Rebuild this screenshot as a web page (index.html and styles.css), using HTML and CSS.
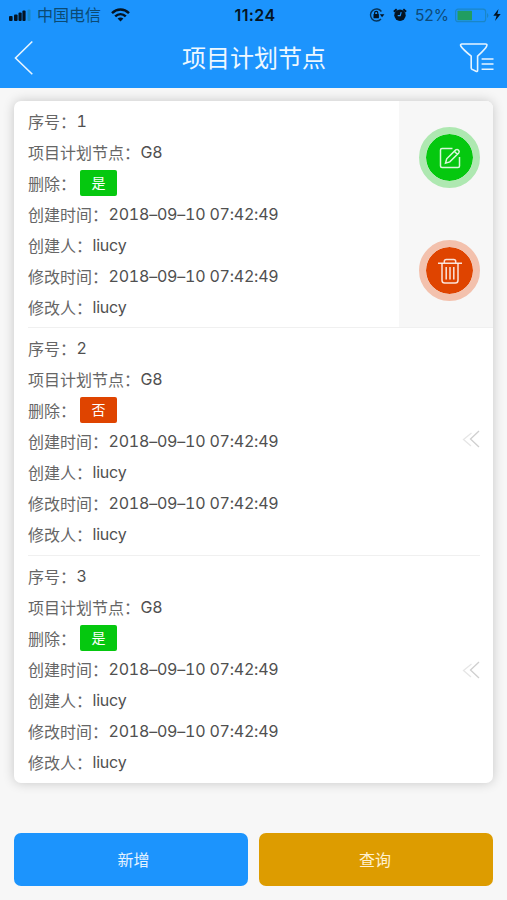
FILE: index.html
```html
<!DOCTYPE html>
<html lang="zh-CN">
<head>
    <meta charset="UTF-8">
    <meta name="viewport" content="width=device-width, initial-scale=1.0">
    <title>项目计划节点</title>
    <link rel="stylesheet" href="styles.css">
</head>
<body>
    <header>
        <div class="status-bar">
            <div class="status-left">
                <svg class="signal" width="22" height="13" viewBox="0 0 22 13">
                    <rect x="0" y="7" width="3.6" height="5" rx="1"/>
                    <rect x="5" y="5.5" width="3.6" height="6.5" rx="1"/>
                    <rect x="9.5" y="3.5" width="3.2" height="8.5" rx="1"/>
                    <rect x="13.4" y="1.5" width="3.2" height="10.5" rx="1"/>
                    <rect x="18.5" y="0.5" width="3" height="11.5" rx="1" fill="#1787c8"/>
                </svg>
                <span class="carrier">中国电信</span>
                <svg class="wifi" width="19" height="14" viewBox="0 0 19 14" fill="none" stroke="#041423" stroke-width="2.5">
                    <path d="M1 5.1C6 0.4 13 0.4 18 5.1"/>
                    <path d="M4.2 8.4C7.3 5.5 11.7 5.5 14.8 8.4"/>
                    <path d="M6.6 10.5C8.4 9 10.6 9 12.4 10.5L9.5 13.4Z" fill="#041423" stroke="none"/>
                </svg>
            </div>
            <span class="clock">11:24</span>
            <div class="status-right">
                <svg width="16" height="14" viewBox="0 0 16 14">
                    <path d="M12.4 3.5A6 6 0 1 0 12 11" fill="none" stroke="#073459" stroke-width="1.4"/>
                    <path d="M10.8 6.2H15.4L13.1 9.2Z"/>
                    <rect x="4.5" y="6" width="5.4" height="4.3" rx="0.5"/>
                    <path d="M5.6 6.2V5A1.6 1.6 0 0 1 8.8 5V6.2" fill="none" stroke="#041423" stroke-width="1.2"/>
                </svg>
                <svg class="alarm" width="14" height="14" viewBox="0 0 14 14">
                    <circle cx="7" cy="7.3" r="5.7"/>
                    <path d="M0.9 3.8L3.7 1.2M10.3 1.2L13.1 3.8" stroke="#041423" stroke-width="2"/>
                    <path d="M8.2 4.2L7.2 7.7H4.7" fill="none" stroke="#1c94fd" stroke-width="1.2"/>
                </svg>
                <span class="percent">52%</span>
                <svg class="battery" width="35" height="15" viewBox="0 0 35 15">
                    <rect x="0.6" y="1.1" width="30" height="12.6" rx="2.5" fill="none" stroke="#1a86c8" stroke-width="1.2"/>
                    <rect x="2.5" y="2.8" width="14.5" height="9.5" rx="0.6" fill="#219d61"/>
                    <path d="M32 5A3 3 0 0 1 32 10Z" fill="#1a86c8"/>
                </svg>
                <svg class="bolt" width="8" height="12" viewBox="0 0 8 12">
                    <path d="M5.5 0L0.3 6.7H3.6L2 12L7.7 5H4.4Z"/>
                </svg>
            </div>
        </div>
        <div class="nav-bar">
            <svg class="back" width="20" height="36" viewBox="0 0 20 36">
                <path d="M18.3 1.5L1.5 18L18.3 34.3"/>
            </svg>
            <h1>项目计划节点</h1>
            <svg class="filter" width="36" height="32" viewBox="0 0 36 32">
                <path d="M2.7 2H26.4Q28.6 2 27.7 4Q27 6.4 18.6 14.2V28.2Q18.6 30 17 29.2L13.2 27.4Q12.2 27 12.2 26V14.2Q3.5 7 1.8 4Q1 2.3 2.7 2Z"/>
                <path d="M22.6 17H34.5M22.6 22H34.5M22.6 27.2H34.5"/>
            </svg>
        </div>
    </header>

    <div class="card">
        <div class="item open">
            <div class="info">
                <p>序号：<span>1</span></p>
                <p>项目计划节点：<span>G8</span></p>
                <p>删除：<b class="tag yes">是</b></p>
                <p>创建时间：<span>2018–09–10 07:42:49</span></p>
                <p>创建人：<span>liucy</span></p>
                <p>修改时间：<span>2018–09–10 07:42:49</span></p>
                <p>修改人：<span>liucy</span></p>
            </div>
            <div class="actions">
                <button class="circle edit">
                    <svg width="24" height="24" viewBox="0 0 24 24">
                        <path d="M14.5 2.5H4Q2.5 2.5 2.5 4V20Q2.5 21.5 4 21.5H20Q21.5 21.5 21.5 20V11"/>
                        <path d="M7.5 17.2L8.7 12.8L17.7 3.9Q19.2 2.9 20.6 4.2Q21.8 5.6 20.7 7L11.8 15.9ZM16.3 5.3L19.3 8.3"/>
                    </svg>
                </button>
                <button class="circle remove">
                    <svg width="26" height="26" viewBox="0 0 26 26">
                        <path d="M1 5.2H25M7.3 5V3.5Q7.3 1.5 9.3 1.5H16.7Q18.7 1.5 18.7 3.5V5"/>
                        <path d="M5 5.5V22.2Q5 25 7.7 25H18.3Q21 25 21 22.2V5.5M9.2 9V21.5M13 9V21.5M16.8 9V21.5"/>
                    </svg>
                </button>
            </div>
        </div>
        <div class="item">
            <div class="info">
                <p>序号：<span>2</span></p>
                <p>项目计划节点：<span>G8</span></p>
                <p>删除：<b class="tag no">否</b></p>
                <p>创建时间：<span>2018–09–10 07:42:49</span></p>
                <p>创建人：<span>liucy</span></p>
                <p>修改时间：<span>2018–09–10 07:42:49</span></p>
                <p>修改人：<span>liucy</span></p>
            </div>
            <svg class="more" width="18" height="18" viewBox="0 0 18 18">
                <path d="M9.5 3L1.5 9.5L9 16" stroke="#e6e6e6"/>
                <path d="M17 1L8.5 9L17 17" stroke="#cfcfcf"/>
            </svg>
        </div>
        <div class="item">
            <div class="info">
                <p>序号：<span>3</span></p>
                <p>项目计划节点：<span>G8</span></p>
                <p>删除：<b class="tag yes">是</b></p>
                <p>创建时间：<span>2018–09–10 07:42:49</span></p>
                <p>创建人：<span>liucy</span></p>
                <p>修改时间：<span>2018–09–10 07:42:49</span></p>
                <p>修改人：<span>liucy</span></p>
            </div>
            <svg class="more" width="18" height="18" viewBox="0 0 18 18">
                <path d="M9.5 3L1.5 9.5L9 16" stroke="#e6e6e6"/>
                <path d="M17 1L8.5 9L17 17" stroke="#cfcfcf"/>
            </svg>
        </div>
    </div>

    <footer>
        <button class="btn add">新增</button>
        <button class="btn search">查询</button>
    </footer>
</body>
</html>
```
FILE: styles.css
```css
* {
    box-sizing: border-box;
}
body {
    font-family: Inter, "Noto Sans CJK SC", sans-serif;
    margin: 0;
    height: 900px;
    background-color: #f7f7f7;
    overflow: hidden;
}
svg {
    display: block;
    flex: none;
}
header {
    height: 88px;
    background-color: #1c94fd;
}
.status-bar {
    display: grid;
    grid-template-columns: 1fr auto 1fr;
    align-items: center;
    height: 30px;
    padding: 0 6px 0 9px;
    color: #041423;
    fill: #041423;
}
.status-left,
.status-right {
    display: flex;
    align-items: center;
}
.status-right {
    justify-content: flex-end;
}
.carrier {
    margin: 0 10px 0 6px;
    font-size: 16px;
    line-height: 30px;
    color: #0b4a73;
}
.clock {
    font-size: 16px;
    font-weight: 600;
    letter-spacing: 0.4px;
}
.alarm {
    margin-left: 8px;
}
.percent {
    margin: 0 6px 0 8px;
    font-size: 15.5px;
    color: #0d4a78;
}
.bolt {
    margin-left: 3px;
}
.nav-bar {
    display: flex;
    align-items: center;
    justify-content: space-between;
    height: 56px;
    padding: 0 12px 0 14px;
}
.nav-bar svg {
    fill: none;
    stroke: #e6f4ff;
    stroke-width: 1.6;
}
.nav-bar h1 {
    margin: 2px 0 0 15px;
    font-size: 24px;
    font-weight: 400;
    line-height: 56px;
    color: #eef8ff;
}
.card {
    margin: 13px 14px 0;
    height: 682px;
    background-color: #fff;
    border-radius: 7px;
    box-shadow: 0 0 12px rgba(0, 0, 0, 0.2);
    overflow: hidden;
}
.item {
    display: flex;
    justify-content: space-between;
    height: 227.4px;
    margin: 0 13px 0 14px;
    padding-top: 4.6px;
    border-bottom: 1px solid #f0f0f0;
}
.item:last-child {
    border-bottom: none;
}
.item.open {
    margin-right: 0;
    padding-top: 0;
}
.open .info {
    padding-top: 4px;
}
.info p {
    display: flex;
    align-items: center;
    height: 31px;
    margin: 0;
    font-size: 16px;
    color: #666;
    white-space: nowrap;
}
.info span {
    margin-left: 0.5px;
    color: #505050;
    font-variant-numeric: tabular-nums;
    letter-spacing: -0.22px;
}
.tag {
    width: 37px;
    height: 26px;
    margin-left: 4px;
    border-radius: 2px;
    font-size: 14px;
    font-weight: 400;
    line-height: 26px;
    text-align: center;
    color: #fff;
}
.yes {
    background-color: #05c80f;
}
.no {
    background-color: #df4400;
}
.actions {
    display: flex;
    flex-direction: column;
    align-items: center;
    justify-content: space-between;
    width: 94px;
    height: 100%;
    padding: 26px 0 26px 7px;
    background-color: #f7f7f7;
}
.circle {
    display: flex;
    align-items: center;
    justify-content: center;
    width: 61px;
    height: 61px;
    padding: 0;
    border: 7.5px solid;
    border-radius: 50%;
}
.circle svg {
    fill: none;
    stroke: #fff;
    stroke-opacity: 0.85;
    stroke-width: 1.5;
}
.edit {
    background-color: #05c80f;
    border-color: #aee8b1;
    background-clip: padding-box;
}
.remove {
    background-color: #df4400;
    border-color: #f3c1ad;
    background-clip: padding-box;
}
.more {
    margin-top: 97px;
    fill: none;
    stroke-width: 1.3;
}
.item:last-child .more {
    margin-top: 101px;
}
footer {
    display: grid;
    grid-template-columns: 1fr 1fr;
    gap: 11px;
    margin: 50px 14px 0;
}
.btn {
    height: 53px;
    padding: 0 2px 2px 0;
    border: none;
    border-radius: 7px;
    font-family: inherit;
    font-size: 16px;
    color: #e4f2ff;
}
.add {
    padding: 0 0 2px 5px;
    background-color: #1c94fd;
}
.search {
    background-color: #dd9c00;
    color: #fff1cf;
}
```
